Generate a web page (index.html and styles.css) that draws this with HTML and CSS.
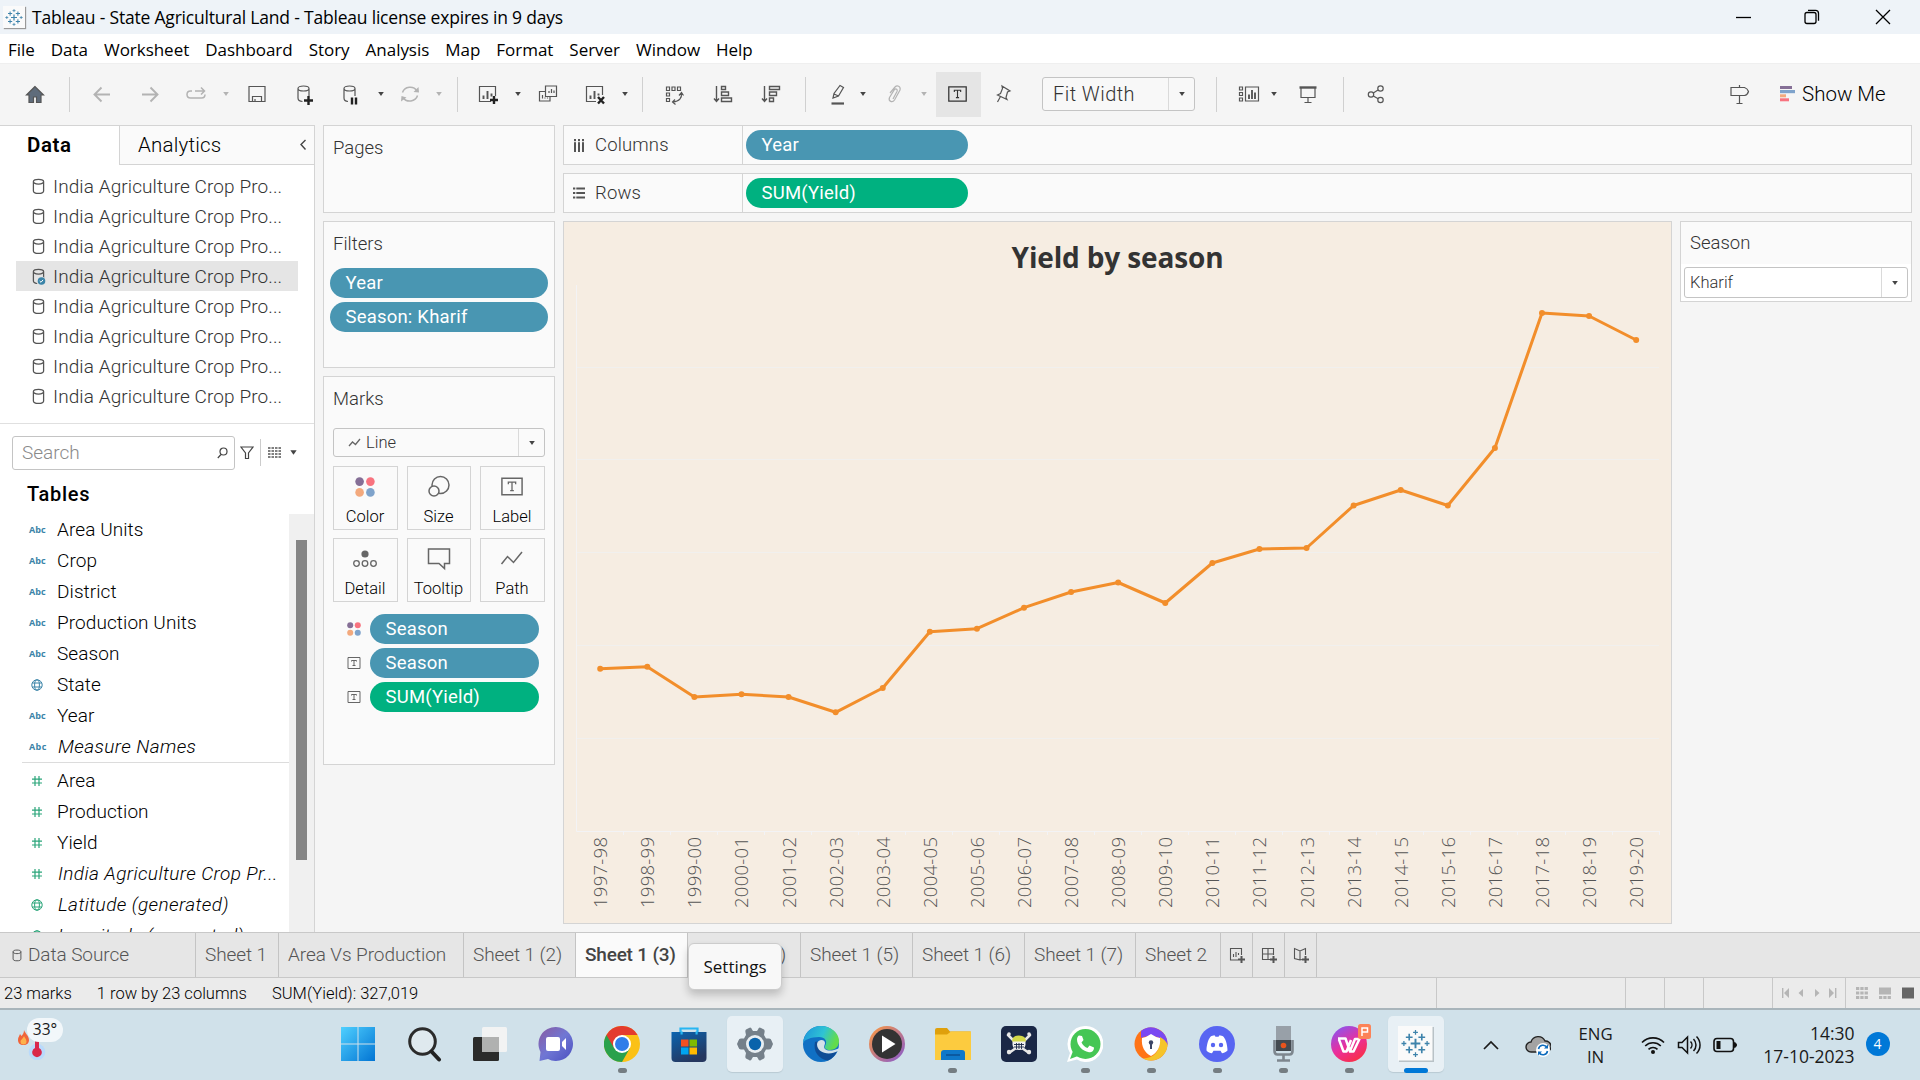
FILE: index.html
```html
<!DOCTYPE html>
<html lang="en">
<head>
<meta charset="utf-8">
<title>Tableau - State Agricultural Land</title>
<link rel="stylesheet" href="styles.css">
</head>
<body>
<svg width="0" height="0" class="defs">
  <defs>
    <symbol id="db" viewBox="0 0 12 16"><path d="M1.2 3.4v8.8c0 1.6 1.6 2.3 4.8 2.3s4.8-.7 4.8-2.3V3.4M1.2 3.4C1.2 2 3 1.3 6 1.3s4.8.7 4.8 2.1S9 5.7 6 5.7 1.2 4.9 1.2 3.4z" fill="none" stroke="#555" stroke-width="1.2"/></symbol>
    <symbol id="caret" viewBox="0 0 8 6"><path d="M1.2 1h5.6L4 5z" fill="currentColor"/></symbol>
    <symbol id="globe" viewBox="0 0 12 12"><g fill="none" stroke="currentColor" stroke-width="1"><circle cx="6" cy="6" r="5.2"/><ellipse cx="6" cy="6" rx="2.4" ry="5.2"/><path d="M1.3 4h9.4M1.3 8h9.4"/></g></symbol>
    <symbol id="hash" viewBox="0 0 12 12"><path d="M4 1v10M8 1v10M1 4.2h10M1 8h10" fill="none" stroke="currentColor" stroke-width="1.2"/></symbol>
    <symbol id="tbox" viewBox="0 0 24 20"><path d="M1 1h22v18H1z" fill="none" stroke="currentColor" stroke-width="1.6"/><path d="M8 7.5V5.3h8v2.2M12 5.3v9.2M10 14.6h4" fill="none" stroke="currentColor" stroke-width="1.4"/></symbol>
    <symbol id="tboxs" viewBox="0 0 14 14"><path d="M1 1.500h12v11H1z" fill="none" stroke="currentColor"/><path d="M4.500 5.500V4.500h5v1M7 4.500v5M5.500 9.500h3" fill="none" stroke="currentColor"/></symbol>
    <symbol id="dots" viewBox="0 0 20 20"><circle cx="4.6" cy="4.6" r="4.3" fill="#856f96"/><circle cx="15.4" cy="4.6" r="4.3" fill="#f8737f"/><circle cx="4.6" cy="15.4" r="4.3" fill="#f3a97d"/><circle cx="15.4" cy="15.4" r="4.3" fill="#7fa3cb"/></symbol>
    <symbol id="tableau" viewBox="0 0 30 30"><g fill="none" stroke="#3e83ab"><path d="M15 10v10M10 15h10" stroke-width="2"/><path d="M8.5 5v7M5 8.5h7M21.500 5v7M18 8.500h7M8.500 18v7M5 21.500h7M21.500 18v7M18 21.500h7" stroke-width="1.700"/><path d="M15 1v5M12.500 3.500h5M15 24v5M12.500 26.500h5M3 12.500v5M.5 15h5M27 12.500v5M24.500 15h5" stroke-width="1.300"/></g></symbol>
  </defs>
</svg>

<header class="titlebar">
  <span class="appicon"><svg width="18" height="19"><use href="#tableau"/></svg></span>
  <span class="apptitle">Tableau - State Agricultural Land - Tableau license expires in 9 days</span>
  <svg class="winbtns" width="160" height="20" viewBox="0 0 160 20"><g fill="none" stroke="#000" stroke-width="1.3"><path d="M1 10.500h15"/><rect x="70" y="5.500" width="11" height="11" rx="2"/><path d="M73 3.300h7.500q3 0 3 3v7.500"/><path d="M141 3l14 14M155 3l-14 14"/></g></svg>
</header>
<nav class="menubar"><span>File</span><span>Data</span><span>Worksheet</span><span>Dashboard</span><span>Story</span><span>Analysis</span><span>Map</span><span>Format</span><span>Server</span><span>Window</span><span>Help</span></nav>

<div class="toolbar">
  <svg class="i m23" viewBox="0 0 24 24"><path d="M12 4.500L3.500 13H6v7.500h4.500V15h3v5.500H18V13h2.500z" fill="#5f6c7b"/></svg>
  <i class="sep m22"></i>
  <svg class="i m20 dim" viewBox="0 0 24 24"><path d="M20 12.500H4.500M11.500 5.500l-7 7 7 7" stroke-width="1.900"/></svg>
  <svg class="i m24 dim" viewBox="0 0 24 24"><path d="M4 12.500h15.500M12.500 5.500l7 7-7 7" stroke-width="1.900"/></svg>
  <svg class="i m22 dim" viewBox="0 0 24 24"><path d="M8 9H6.500Q3 9 3 12.500T6.500 16H17.500Q21 16 21 12.500M11 9h9M17 5.500L20.500 9 17 12.500" stroke-width="1.500"/></svg>
  <svg class="c m14 faint"><use href="#caret"/></svg>
  <svg class="i m15" viewBox="0 0 24 24"><path d="M4 4.500h16v15H4zM7.500 19.500v-5h9v5M10 19.500v-2.500"/></svg>
  <svg class="i m25" viewBox="0 0 24 24"><path d="M4 6.500v9.500c0 2 1.500 3.300 4.500 3.500M4 6.500c0-1.500 2-2.500 5.500-2.500S15 5 15 6.500 13 9 9.500 9 4 8 4 6.500zM15 6.500V14"/><path d="M14.500 14v9M10 18.500h9" class="bold"/></svg>
  <svg class="i m21" viewBox="0 0 24 24"><path d="M5 6.500v9.500c0 2 1.500 3.300 4 3.500M5 6.500C5 5 7 4 10.500 4S16 5 16 6.500 14 9 10.500 9 5 8 5 6.500zM16 6.500V14"/><path d="M13 15.500v7M17 15.500v7" class="bold"/></svg>
  <svg class="c m14"><use href="#caret"/></svg>
  <svg class="i m13 dim" viewBox="0 0 24 24"><path d="M4.500 10.500A8 7.500 0 0 1 19 9M19.500 13.500A8 7.500 0 0 1 5 15.500" stroke-width="1.500"/><path d="M20.500 5l.5 5.500-5.500-.5zM3 19.500L3.500 14l5 1.500z" fill="#b3b3b3" stroke="none"/></svg>
  <svg class="c m13 faint"><use href="#caret"/></svg>
  <i class="sep m14"></i>
  <svg class="i m19" viewBox="0 0 24 24"><path d="M14 19.500H2.500v-15h16V14"/><path d="M6.500 13.500v3.500M10.500 9v8M14.500 11.500v3" stroke-width="1.900"/><path d="M17 14v8M13 18h8" class="bold"/></svg>
  <svg class="c m13"><use href="#caret"/></svg>
  <svg class="i m14" viewBox="0 0 24 24"><path d="M9.500 4h11v10.500h-11zM9.500 9.500H3.500v9.500h10.500v-4.500M13 11V9M15.500 11V7M18 11V8.500M6.500 16.500V13M9 16.500V15.500M11.500 16.500V15.500"/></svg>
  <svg class="i m24" viewBox="0 0 24 24"><path d="M12 19.500H2.500v-15h16V13"/><path d="M6.500 13.500v3.500M10.500 9v8M14.500 11.500v2" stroke-width="1.900"/><path d="M14 15l6 6.500M20 15l-6 6.500" class="bold"/></svg>
  <svg class="c m13"><use href="#caret"/></svg>
  <i class="sep m13"></i>
  <svg class="i m19" viewBox="0 0 24 24"><path d="M4.500 5h3v3.500h-3zM10 5h3v3.500h-3zM15.500 5h3v3.500h-3zM4.500 11h3v3h-3zM4.500 16.500h3v3h-3zM19.500 11c.5 5-2 8.500-8.500 9M17 13.500l2.500-3 2 3M13 17.500L10.500 20l3 2.500"/></svg>
  <svg class="i m25" viewBox="0 0 24 24"><path d="M5.500 4v15M3 16.500l2.500 3 2.500-3M10.500 4.500h4v3h-4zM10.500 10h7v3.500h-7zM10.500 16h10v3.500h-10z" stroke-width="1.400"/></svg>
  <svg class="i m24" viewBox="0 0 24 24"><path d="M5.500 4v15M3 16.500l2.500 3 2.500-3M10.500 4.500h10v3h-10zM10.500 10h7v3.500h-7zM10.500 16h4v3.500h-4z" stroke-width="1.400"/></svg>
  <i class="sep m22"></i>
  <svg class="i m20" viewBox="0 0 24 24"><path d="M7 16l1-4.500 6-8 3.500 2-5 8.500zM8 12l4.500 2"/><path d="M5.500 21.500h12.500" stroke-width="2.200"/></svg>
  <svg class="c m9"><use href="#caret"/></svg>
  <svg class="i m16 dim" viewBox="0 0 24 24"><path d="M7 11l5-6c2-2 6-1 5 3l-5.500 10c-2 3-6.500 1.500-5-2.500l5-8c1.500-1.500 3.500 0 2.500 2l-4 7.500"/></svg>
  <svg class="c m13 faint"><use href="#caret"/></svg>
  <span class="on m8"><svg width="19" height="16"><use href="#tbox"/></svg></span>
  <svg class="i m10" viewBox="0 0 24 24"><path d="M11 4l8 5-2.500 1-1.500 5.500 1 2-9.500-4.500 3-1.500 2-5zM9.500 14.500L6.500 20"/></svg>
  <div class="fit m27"><span>Fit Width</span><b><svg class="c"><use href="#caret"/></svg></b></div>
  <i class="sep m21"></i>
  <svg class="i m20" viewBox="0 0 24 24"><path d="M8.500 5h13v14h-13zM2.500 5h3v3h-3zM2.500 10.500h3v3h-3zM2.500 16h3v3h-3z"/><path d="M12 12.500v4.500M15 8v9M18 10.500V17" stroke-width="1.900"/></svg>
  <svg class="c m9"><use href="#caret"/></svg>
  <svg class="i m18" viewBox="0 0 24 24"><path d="M5 6v9.500h14V6M12 15.500V20M8.500 20.500h7"/><path d="M3.500 5.500h17" stroke-width="2.400"/></svg>
  <i class="sep m23"></i>
  <svg class="i m20" viewBox="0 0 24 24"><circle cx="7" cy="12.500" r="2.700"/><circle cx="16.500" cy="6.500" r="2.700"/><circle cx="16.500" cy="18" r="2.700"/><path d="M9.300 11L14 8M9.300 14l4.900 2.800"/></svg>
  <svg class="i right" viewBox="0 0 24 24"><path d="M4 5.500h13.500q3 1 4 4-1 3.500-4 4H4zM12.500 3v2.500M12.500 13.500v7.500M9.500 21.500h6"/></svg>
  <svg class="sm" width="16" height="16"><path d="M0 0h12v3H0z" fill="#856f96"/><path d="M0 4h15v3.200H0z" fill="#7fa3cb"/><path d="M0 8.300h6v3H0z" fill="#f3a97d"/><path d="M0 12.300h9v3H0z" fill="#f8737f"/></svg>
  <span class="showme">Show Me</span>
</div>

<main class="work">
  <aside class="datapane">
    <div class="panetabs"><b>Data</b><div><span>Analytics</span><svg width="8" height="12"><path d="M6.500 1L2 5.500l4.500 5" fill="none" stroke="#444" stroke-width="1.400"/></svg></div></div>
    <ul class="sources">
      <li><svg><use href="#db"/></svg>India Agriculture Crop Pro...</li>
      <li><svg><use href="#db"/></svg>India Agriculture Crop Pro...</li>
      <li><svg><use href="#db"/></svg>India Agriculture Crop Pro...</li>
      <li class="sel"><svg><use href="#db"/><circle cx="10" cy="13" r="4.700" fill="#e5e5e5"/><circle cx="10.500" cy="13" r="3.800" fill="#3b84a8"/><path d="M8.700 13l1.300 1.300 2-2.400" fill="none" stroke="#fff"/></svg>India Agriculture Crop Pro...</li>
      <li><svg><use href="#db"/></svg>India Agriculture Crop Pro...</li>
      <li><svg><use href="#db"/></svg>India Agriculture Crop Pro...</li>
      <li><svg><use href="#db"/></svg>India Agriculture Crop Pro...</li>
      <li><svg><use href="#db"/></svg>India Agriculture Crop Pro...</li>
    </ul>
    <div class="searchrow">
      <div class="search"><span>Search</span><svg width="11" height="12"><g fill="none" stroke="#444" stroke-width="1.200"><circle cx="6.500" cy="4.500" r="3.500"/><path d="M4 7.500L.8 11"/></g></svg></div>
      <svg class="funnel" width="14" height="14"><path d="M1 1h12L8.500 7v5.500h-3V7z" fill="none" stroke="#444" stroke-width="1.200"/></svg>
      <i></i>
      <svg class="listicon" width="13" height="11"><path d="M0 1h13M0 4h13M0 7h13M0 10h13" stroke="#555" stroke-width="1.600" stroke-dasharray="2.500 1"/></svg>
      <svg class="c"><use href="#caret"/></svg>
    </div>
    <h3>Tables</h3>
    <div class="fieldwrap">
      <ul class="fields">
        <li><em>Abc</em><span>Area Units</span></li>
        <li><em>Abc</em><span>Crop</span></li>
        <li><em>Abc</em><span>District</span></li>
        <li><em>Abc</em><span>Production Units</span></li>
        <li><em>Abc</em><span>Season</span></li>
        <li><svg class="blue"><use href="#globe"/></svg><span>State</span></li>
        <li><em>Abc</em><span>Year</span></li>
        <li class="gen"><em>Abc</em><span>Measure Names</span></li>
        <li class="rule"></li>
        <li><svg><use href="#hash"/></svg><span>Area</span></li>
        <li><svg><use href="#hash"/></svg><span>Production</span></li>
        <li><svg><use href="#hash"/></svg><span>Yield</span></li>
        <li class="gen"><svg><use href="#hash"/></svg><span>India Agriculture Crop Pr...</span></li>
        <li class="gen"><svg><use href="#globe"/></svg><span>Latitude (generated)</span></li>
        <li class="gen"><svg><use href="#globe"/></svg><span>Longitude (generated)</span></li>
      </ul>
      <div class="scroll"><i></i></div>
    </div>
  </aside>

  <section class="cards">
    <div class="card pages"><h4>Pages</h4></div>
    <div class="card filters"><h4>Filters</h4><div class="pill">Year</div><div class="pill">Season: Kharif</div></div>
    <div class="card marks">
      <h4>Marks</h4>
      <div class="select"><svg width="13" height="10"><path d="M1 8l3.500-4 3 2.500L12 1" fill="none" stroke="#666" stroke-width="1.300"/></svg><span>Line</span><b><svg class="c"><use href="#caret"/></svg></b></div>
      <div class="btns">
        <div><svg><use href="#dots" x="2" y="2" width="20" height="20"/></svg>Color</div>
        <div><svg><g fill="none" stroke="#666" stroke-width="1.500"><circle cx="13.500" cy="10" r="8.500"/><circle cx="7" cy="16" r="5" fill="#fafafa"/></g></svg>Size</div>
        <div><svg class="grey"><use href="#tbox" x="1" y="2" width="22" height="19"/></svg>Label</div>
        <div><svg><circle cx="12" cy="7" r="3.600" fill="#666"/><g fill="none" stroke="#666" stroke-width="1.300"><circle cx="3.500" cy="16.500" r="2.800"/><circle cx="12" cy="16.500" r="2.800"/><circle cx="20.500" cy="16.500" r="2.800"/></g></svg>Detail</div>
        <div><svg><path d="M1.500 2h21v14.500h-5v5l-5.500-5H1.500z" fill="none" stroke="#666" stroke-width="1.500"/></svg>Tooltip</div>
        <div><svg><path d="M1.500 17l6-7.500 6 6L22 5" fill="none" stroke="#666" stroke-width="1.500"/></svg>Path</div>
      </div>
      <div class="encs">
        <svg><use href="#dots"/></svg><div class="pill">Season</div>
        <svg class="grey"><use href="#tboxs"/></svg><div class="pill">Season</div>
        <svg class="grey"><use href="#tboxs"/></svg><div class="pill green">SUM(Yield)</div>
      </div>
    </div>
  </section>

  <section class="view">
    <div class="shelf"><div class="shelfname"><svg width="12" height="13"><path d="M2 0v13M6 0v13M10 0v13" stroke="#555" stroke-width="2"/><path d="M0 2.700h12" stroke="#fafafa"/></svg>Columns</div><div class="pill">Year</div></div>
    <div class="shelf"><div class="shelfname"><svg width="12" height="12"><path d="M0 1.500h12M0 6h12M0 10.500h12" stroke="#555" stroke-width="2"/><path d="M2.800 0v12" stroke="#fafafa"/></svg>Rows</div><div class="pill green">SUM(Yield)</div></div>
    <div class="lower">
      <div class="canvas">
        <h1>Yield by season</h1>
        <svg class="plot" id="plot" width="1107" height="650"></svg>
      </div>
      <div class="filtercard"><h4>Season</h4><div class="select"><span>Kharif</span><b><svg class="c"><use href="#caret"/></svg></b></div></div>
    </div>
  </section>
</main>

<div class="sheets">
  <span class="ds"><svg width="10" height="13"><use href="#db"/></svg>Data Source</span><span class="w83">Sheet 1</span><span class="w185">Area Vs Production</span><span class="w112">Sheet 1 (2)</span><span class="w112 cur">Sheet 1 (3)</span><span class="w113">Sheet 1 (4)</span><span class="w112">Sheet 1 (5)</span><span class="w112">Sheet 1 (6)</span><span class="w111">Sheet 1 (7)</span><span class="w85">Sheet 2</span>
  <span class="new"><svg viewBox="0 0 16 16"><path d="M9 13H1.500V1.500h11V8M4.500 10V7M7 10V5M9.500 8V6"/><path d="M12.500 9v7M9 12.500h7" stroke-width="2"/></svg></span>
  <span class="new"><svg viewBox="0 0 16 16"><path d="M9 12.500H1.500v-11h11V8M1.500 7h11M7 1.500v11"/><path d="M12.500 9v7M9 12.500h7" stroke-width="2"/></svg></span>
  <span class="new"><svg viewBox="0 0 16 16"><path d="M9 12.500L7 13l-5.500-1.500v-10L7 4l5.500-2.500V8M7 4v9"/><path d="M12.500 9v7M9 12.500h7" stroke-width="2"/></svg></span>
</div>
<div class="status">
  <span>23 marks</span><span>1 row by 23 columns</span><span>SUM(Yield): 327,019</span>
  <div class="cells"><i class="c1"></i><i class="c2"></i><i class="c3"></i><i class="c4"></i>
    <i class="c5"><svg width="56" height="10" fill="#b5b5b5"><path d="M1 0h1.400v10H1zM8 0v10L3 5zM22 1v8l-4.500-4zM34 1v8l4.500-4zM48 0v10l5-5zM54 0h1.400v10H54z"/></svg></i>
    <i class="c6"><svg width="58" height="12"><path d="M0 1.500h12M0 6h12M0 10.500h12" stroke="#b5b5b5" stroke-width="3" stroke-dasharray="3.300 1"/><path d="M23 .5h12v7H23z" fill="#b5b5b5"/><path d="M23 10.500h12" stroke="#b5b5b5" stroke-width="3" stroke-dasharray="3.300 1"/><path d="M46 .5h12v11H46z" fill="#666"/></svg></i></div>
</div>

<footer class="taskbar">
  <div class="weather">
    <svg width="48" height="44" viewBox="0 0 48 44"><path d="M7 14c1 3 5 6 5 10 0 3-2 5-5.500 5S1 27 1 24c0-3 1.500-4 2-6l1.500 2C6 18.500 7 17 7 14z" fill="#f0643a"/><path d="M7 20c.5 2 2.500 3 2.500 5.500 0 2-1 3-3 3s-3-1-3-3S6 23 7 20z" fill="#fdb24b"/><circle cx="20" cy="36" r="8.300" fill="#b9dafc"/><path d="M18 18h4v14a4.800 4.800 0 1 1-4 0z" fill="#d9274b"/></svg>
    <span>33°</span>
  </div>
  <div class="apps">
    <div><svg viewBox="0 0 36 36"><defs><linearGradient id="gw" x2="1" y2="1"><stop stop-color="#4fd0ff"/><stop offset="1" stop-color="#0274d3"/></linearGradient></defs><path d="M1 1h16.500v16.500H1zM18.500 1H35v16.500H18.500zM1 18.500h16.500V35H1zM18.500 18.500H35V35H18.500z" fill="url(#gw)"/></svg></div>
    <div><svg viewBox="0 0 36 36"><circle cx="16.500" cy="15.500" r="12.800" fill="#dfe9ee" stroke="#2b2b2b" stroke-width="3"/><path d="M25.500 25.500l7.500 8" stroke="#222" stroke-width="4" stroke-linecap="round"/></svg></div>
    <div><svg viewBox="0 0 36 36"><rect x="1" y="11" width="26" height="24" rx="1.500" fill="#2b2b2a"/><rect x="10" y="1" width="25" height="25" rx="1.500" fill="#f3f3f3" opacity=".95"/><path d="M10 11h17v15H10z" fill="#b0b1b0"/></svg></div>
    <div><svg viewBox="0 0 36 36"><defs><linearGradient id="gc" x2="1" y2="1"><stop stop-color="#8a5aa0"/><stop offset=".5" stop-color="#7077d4"/><stop offset="1" stop-color="#4a4fc0"/></linearGradient></defs><path d="M18 1a17 17 0 1 1-8 32l-8.500 2 1-9A17 17 0 0 1 18 1z" fill="url(#gc)"/><rect x="8" y="11" width="14" height="14" rx="2" fill="#fff"/><path d="M24 16l4-4v12l-4-4z" fill="#fff"/></svg></div>
    <div class="run"><svg viewBox="0 0 36 36"><circle cx="18" cy="18" r="18" fill="#fbc116"/><path d="M18 18L2.400 9A18 18 0 0 0 18 36l8-14z" fill="#2aa14c"/><path d="M18 9h15.600a18 18 0 0 0-31.200 0l8 13.500z" fill="#e33b2e"/><circle cx="18" cy="18" r="9" fill="#fff"/><circle cx="18" cy="18" r="7" fill="#2f7de9"/></svg></div>
    <div><svg viewBox="0 0 36 36"><defs><linearGradient id="gs" x2=".5" y2="1"><stop stop-color="#0a64b0"/><stop offset="1" stop-color="#25375f"/></linearGradient></defs><path d="M9.500 8V2.500h17V8" fill="none" stroke="#27b6f2" stroke-width="2.200"/><path d="M.5 6h35v26q0 4-4 4h-27q-4 0-4-4z" fill="url(#gs)"/><path d="M9.500 5.500h2.200v3H9.500zM24.500 5.500h2.200v3h-2.200z" fill="#27b6f2"/><path d="M10 13.500h7.500v7H10z" fill="#f25022"/><path d="M18.500 13.500H26v7h-7.500z" fill="#7fba00"/><path d="M10 21.500h7.500v7H10z" fill="#00a4ef"/><path d="M18.500 21.500H26v7h-7.500z" fill="#ffb900"/></svg></div>
    <div class="hot"><svg viewBox="0 0 36 36"><path d="M12 2q2-1.500 3 1.500l1 1.500h4l1-1.500q1-3 3-1.500l3 1.500q1 .8.500 3L27 9l2 3.500h3q2 0 2.500 2L36 18l-1.500 3.500q-.5 2-2.500 2h-3L27 27l.5 2.500q.5 2-.5 3L24 34q-2 1.500-3-1.500L20 31h-4l-1 1.500q-1 3-3 1.500l-3-1.500q-1-1-.5-3L9 27l-2-3.500H4q-2 0-2.500-2L0 18l1.500-3.500q.5-2 2.500-2h3L9 9l-.5-2.500q-.5-2 .5-3z" fill="#75808a"/><circle cx="18" cy="18" r="9" fill="#e8eef2"/><circle cx="18" cy="18" r="6.200" fill="#0a63ab"/></svg></div>
    <div><svg viewBox="0 0 36 36"><defs><linearGradient id="ge" x2="1" y2=".3"><stop stop-color="#1c92dc"/><stop offset=".6" stop-color="#2fc3d4"/><stop offset="1" stop-color="#62dc4c"/></linearGradient></defs><circle cx="18" cy="18" r="18" fill="#1070c4"/><path d="M0 17C1 7 8 0 18 0c10 0 18 7 18 15 0 6-4 9-9 9-4 0-6-2-5-4 3-5 0-9-6-9C8 11 1 14 0 17z" fill="url(#ge)"/><path d="M12 16c-2 9 3 17 13 18.500 4-1.500 8-6 9-9.500-8 4-18 1-17-7-2-3-4-3-5-2z" fill="#0f4c95"/><path d="M14 18c.5-5 8-5.500 8-1 0 2-2 4 0 6 3 2.500 8 2 14.500-1L35 25c-9 5-21 2-21-7z" fill="#d3e1e9"/></svg></div>
    <div><svg viewBox="0 0 36 36"><defs><linearGradient id="gm" x2="1" y2="1"><stop stop-color="#ff9a3c"/><stop offset="1" stop-color="#8358d2"/></linearGradient></defs><circle cx="18" cy="18" r="18" fill="url(#gm)"/><circle cx="18" cy="18" r="15" fill="#333"/><path d="M13 9.500L26.500 18 13 26.500z" fill="#fff"/></svg></div>
    <div class="run"><svg viewBox="0 0 36 36"><path d="M0 4q0-2 2-2h10l3 3.500H35q1 0 1 1V14H0z" fill="#dfa00c"/><path d="M0 8.500h12l4-3h20V34H0z" fill="#fccb3f"/><path d="M6 34v-7q0-3 3-3h18q3 0 3 3v7z" fill="#0f78c9"/><path d="M11 29h14" stroke="#0b4f92" stroke-width="1.500"/></svg></div>
    <div><svg viewBox="0 0 36 36"><rect width="36" height="36" rx="5" fill="#1a2746"/><path d="M7 9l5 5M29 9l-5 5M8 27l7-5M28 27l-7-5" stroke="#e8e8e8" stroke-width="2.500" stroke-linecap="round"/><g fill="#e8e8e8"><circle cx="8" cy="8" r="1.800"/><circle cx="28" cy="8" r="1.800"/><circle cx="8" cy="26" r="2.200"/><circle cx="28" cy="26" r="2.200"/></g><path d="M11.500 15h13v4q-1 5-6.500 5t-6.500-5z" fill="#f0f0f0"/><path d="M11 15.500q0-6 7-6t7 6z" fill="#d3d84a"/><path d="M13 18.500h10M13 21h10M15.500 17v6M18 17v6M20.500 17v6" stroke="#1a2746" stroke-width=".9"/></svg></div>
    <div class="run"><svg viewBox="0 0 36 36"><path d="M18.500 0A17.500 18 0 1 1 10 33.500L0 36l3-9A17.500 18 0 0 1 18.500 0z" fill="#fff"/><circle cx="18.500" cy="18" r="15" fill="#45c654"/><path d="M3 33l3-8 5 5z" fill="#45c654"/><path d="M12 9.500l3 .5 1.500 4-2 2.500c1.500 3 3.500 4.500 6 5.500l2-2.500 4.500 2c0 3.500-2.500 5-5 4.800C15 25 10 19 10 13.500c0-2 1-3.500 2-4z" fill="#fff"/></svg></div>
    <div class="run"><svg viewBox="0 0 36 36"><circle cx="18" cy="18" r="16.500" fill="#ff7417"/><path d="M8 5a16.500 16.500 0 0 1 26.500 14C28 10 18 8 8 12z" fill="#7a48f2"/><path d="M34.500 19A16.500 16.500 0 0 1 10 32.500C22 32 28 24 27 11q6 3 7.500 8z" fill="#f5c42a"/><path d="M9 12q5-1 9-4 4 3 9 4c1 9-3 15-9 18-6-3-10-9-9-18z" fill="#fff"/><circle cx="18" cy="16.500" r="2.200" fill="#3c4566"/><path d="M17 17h2v6h-2z" fill="#3c4566"/></svg></div>
    <div class="run"><svg viewBox="0 0 36 36"><circle cx="18" cy="18" r="18" fill="#5865f2"/><path d="M12.500 10l3-.8 1 1.600h3l1-1.600 3 .8c3 1.500 5 9 5 14.500-2 2-4 2.500-5.500 2.800l-1.500-2.500h-7L13 27.300c-2-.3-4-1-5.500-2.800 0-5.500 2-13 5-14.500z" fill="#fff"/><circle cx="14" cy="19" r="2.200" fill="#5865f2"/><circle cx="22" cy="19" r="2.200" fill="#5865f2"/></svg></div>
    <div class="run"><svg viewBox="0 0 36 36"><path d="M11 0h15v14H11z" fill="#98a0a8"/><path d="M11 14h15v11H11z" fill="#444a50"/><path d="M9.500 14v11q0 3.500 3 3.500h12q3 0 3-3.500V14M18.500 29v6M12 34.500h13" fill="none" stroke="#7d868e" stroke-width="2.600"/><circle cx="18.500" cy="19.500" r="2.800" fill="#e8541d"/></svg></div>
    <div class="run"><svg viewBox="0 0 36 36" overflow="visible"><defs><linearGradient id="gp" x1=".2" x2=".8" y2="1"><stop stop-color="#8b55ee"/><stop offset=".5" stop-color="#e92f9e"/><stop offset="1" stop-color="#fb2f3d"/></linearGradient></defs><circle cx="18" cy="18" r="18" fill="url(#gp)"/><path d="M7 12.500h7.500L19 25.500h3.500L28.500 13H24L19 25M8 13.500l4.500 12h3L20 14" fill="none" stroke="#fff" stroke-width="2.500" stroke-linejoin="round"/><rect x="27" y="-2" width="13" height="15" rx="2.500" fill="#fc8358"/><path d="M31 10V2h5.500v4H31" fill="none" stroke="#fff" stroke-width="1.500"/></svg></div>
    <div class="hot active"><svg viewBox="0 0 36 36"><rect x="1" y="1" width="35" height="35" fill="#b9c2c7"/><rect width="34.500" height="34.500" fill="#fafafa"/><use href="#tableau" x="3" y="3" width="29" height="29"/></svg></div>
  </div>
  <div class="tray">
    <svg width="16" height="10"><path d="M1 9l7-7 7 7" fill="none" stroke="#1a1a1a" stroke-width="1.700"/></svg>
    <svg class="cloud" width="26" height="26"><path d="M6 20a5 5 0 0 1 0-10 7.500 7.500 0 0 1 14-1 5.500 5.500 0 0 1 1 11z" fill="#a3a3a3" stroke="#222" stroke-width="1.400"/><circle cx="18" cy="18" r="7" fill="#fff"/><path d="M13.500 17a4.600 4.600 0 0 1 8.500-1.500M22.500 19a4.600 4.600 0 0 1-8.500 1.500" fill="none" stroke="#0f6cbd" stroke-width="1.600"/><path d="M23 12.500v4h-4zM13 23.500v-4h4z" fill="#0f6cbd"/></svg>
    <div class="lang"><span>ENG</span><span>IN</span></div>
    <svg class="wifi" width="24" height="20"><g fill="none" stroke="#111" stroke-width="1.600"><path d="M1 7.500a15.500 15.500 0 0 1 22 0M4.200 11a11 11 0 0 1 15.600 0M7.500 14.300a6.500 6.500 0 0 1 9 0"/></g><circle cx="12" cy="17" r="2" fill="#111"/></svg>
    <svg class="vol" width="25" height="20"><g fill="none" stroke="#111" stroke-width="1.500"><path d="M1.500 7.500H5L10.500 2v16L5 12.500H1.500zM13.500 6.500a5 5 0 0 1 0 7M16.500 4a8.500 8.500 0 0 1 0 12M19.500 1.500a12 12 0 0 1 0 17"/></g></svg>
    <svg class="bat" width="24" height="16"><rect x="1" y="1.500" width="19.500" height="13" rx="3" fill="none" stroke="#111" stroke-width="1.600"/><path d="M3.500 4h4v8h-4z" fill="#111"/><path d="M21.500 5.500q2 .5 2 2.500t-2 2.500z" fill="#111" stroke="#111"/></svg>
    <div class="clock"><span>14:30</span><span>17-10-2023</span></div>
    <b>4</b>
  </div>
</footer>
<div class="tip">Settings</div>
<script src="chart.js"></script>
</body>
</html>
```
FILE: styles.css
```css
* { box-sizing: border-box; }
body { margin: 0; width: 1920px; height: 1080px; overflow: hidden; display: flex; flex-direction: column; background: #f5f5f5; font-family: Roboto, "Liberation Sans", sans-serif; font-weight: 300; font-size: 19px; color: #333; position: relative; }
ul, h1, h3, h4 { margin: 0; padding: 0; list-style: none; font-weight: inherit; }
svg { flex: none; }
.defs { position: absolute; }
.titlebar { height: 34px; flex: none; background: #eef3f8; display: flex; align-items: center; padding: 0 25px 0 3px; font-family: "Open Sans", sans-serif; font-weight: 400; font-size: 17px; color: #000; }
.appicon { width: 22px; height: 22px; background: #fafafa; box-shadow: 1px 1px 1px #999; display: grid; place-items: center; }
.apptitle { margin-left: 7px; font-size: 17.500px; letter-spacing: -.2px; }
.winbtns { margin-left: auto; }
.menubar { height: 30px; flex: none; background: #fff; border-bottom: 1px solid #efefef; display: flex; align-items: center; gap: 16px; padding: 2px 0 0 8px; font-family: "Open Sans", sans-serif; font-weight: 400; font-size: 17px; color: #000; letter-spacing: -.03px; }
.toolbar { height: 61px; flex: none; display: flex; align-items: center; padding-bottom: 1px; }
.i { width: 24px; height: 24px; fill: none; stroke: #555; stroke-width: 1.2; }
.i.dim { stroke: #b3b3b3; }
.bold { stroke: #222; stroke-width: 2.4; }
.c { width: 8px; height: 6px; color: #444; }
.faint { color: #b3b3b3; }
.sep { width: 1px; height: 35px; background: #d0d0d0; }
.m8 { margin-left: 8px } .m9 { margin-left: 9px } .m10 { margin-left: 10px } .m13 { margin-left: 13px } .m14 { margin-left: 14px } .m15 { margin-left: 15px } .m16 { margin-left: 16px } .m18 { margin-left: 18px } .m19 { margin-left: 19px } .m20 { margin-left: 20px } .m21 { margin-left: 21px } .m22 { margin-left: 22px } .m23 { margin-left: 23px } .m24 { margin-left: 24px } .m25 { margin-left: 25px } .m27 { margin-left: 27px }
.on { width: 45px; height: 45px; background: #e5e5e5; display: grid; place-items: center; color: #333; }
.on svg { margin-right: 2px; margin-bottom: 1px; }
.fit { width: 153px; height: 34px; border: 1px solid #c4c4c4; border-radius: 3px; display: flex; align-items: center; font-size: 20px; background: #f8f8f8; padding-left: 10px; letter-spacing: .45px; }
.fit b, .select b { margin-left: auto; width: 26px; align-self: stretch; border-left: 1px solid #dadada; display: grid; place-items: center; }
.right { margin-left: auto; }
.sm { margin-left: 29px; }
.showme { margin-left: 6px; width: 118px; font-size: 20.5px; color: #000; }

.work { height: 807px; flex: none; display: flex; }
.datapane { width: 315px; background: #fff; border-top: 1px solid #d4d4d4; border-right: 1px solid #d4d4d4; display: flex; flex-direction: column; overflow: hidden; }
.panetabs { height: 39px; flex: none; display: flex; font-size: 20.5px; color: #000; line-height: 38px; letter-spacing: .2px; }
.panetabs b { width: 119px; padding-left: 27px; font-weight: 600; letter-spacing: .6px; }
.panetabs div { flex: 1; background: #fafafa; border-left: 1px solid #d4d4d4; border-bottom: 1px solid #d4d4d4; padding: 0 7px 0 18px; display: flex; justify-content: space-between; align-items: center; }
.sources { height: 259px; flex: none; padding: 6px 16px 0; border-bottom: 1px solid #e0e0e0; letter-spacing: .09px; }
.sources li { height: 30px; display: flex; align-items: center; padding-left: 15px; white-space: nowrap; }
.sources svg { width: 15px; height: 17px; margin-right: 7px; }
.sources use { width: 11px; height: 15px; }
.sources .sel { background: #e5e5e5; }
.searchrow { height: 57px; flex: none; display: flex; align-items: center; padding-left: 12px; }
.search { width: 223px; height: 34px; border: 1px solid #c4c4c4; border-radius: 3px; display: flex; align-items: center; justify-content: space-between; padding: 0 6px 0 9px; color: #8a8a8a; }
.searchrow i { width: 1px; height: 27px; background: #ccc; margin: 0 7px 0 6px; }
.funnel { margin-left: 5px; }
.searchrow .c { margin-left: 8px; width: 9px; height: 7px; }
h3 { font-size: 20px; font-weight: 500; color: #000; height: 33px; flex: none; padding-left: 27px; line-height: 26px; letter-spacing: .7px; }
.fieldwrap { height: 418px; flex: none; display: flex; overflow: hidden; }
.fields { width: 289px; color: #000; letter-spacing: .08px; }
.fields li { height: 31px; display: flex; align-items: center; }
.fields span { white-space: nowrap; }
.fields em { width: 28px; margin-left: 29px; font: 700 9px "Open Sans", sans-serif; color: #3b84a8; }
.fields svg { width: 12px; height: 12px; margin: 0 14px 0 31px; color: #2ba57a; }
.fields svg.blue { color: #3b84a8; }
.fields .gen { font-style: italic; letter-spacing: .4px; }
.fields .gen span { margin-left: 1px; }
.fields .rule { height: 1px; margin: 0 0 2px 22px; background: #dcdcdc; }
.scroll { flex: 1; background: #f0f0f0; padding: 26px 7px 0; }
.scroll i { display: block; height: 320px; background: #858585; }

.cards { width: 232px; margin-left: 8px; display: flex; flex-direction: column; gap: 8px; font-size: 18.500px; }
.card { background: #fafafa; border: 1px solid #d4d4d4; }
.card h4 { padding: 10px 0 0 9px; line-height: 24px; }
.pages { height: 88px; } .filters { height: 147px; } .marks { height: 389px; }
.pill { height: 30px; border-radius: 15px; background: #4996b2; color: #fff; font-weight: 400; font-size: 18.500px; line-height: 31px; padding-left: 15.500px; letter-spacing: .2px; }
.pill.green { background: #00b180; }
.filters .pill { margin: 12px 6px 0; }
.filters .pill + .pill { margin-top: 4px; }
.select { height: 29px; border: 1px solid #c4c4c4; border-radius: 3px; display: flex; align-items: center; font-size: 16.500px; }
.marks .select { margin: 17px 9px 0; padding-left: 14px; }
.marks .select span { margin-left: 5px; }
.btns { display: grid; grid-template-columns: 65px 64px 65px; gap: 8px 9px; margin: 9px 9px 0; }
.btns div { height: 64px; border: 1px solid #d4d4d4; display: flex; flex-direction: column; align-items: center; font-size: 16.500px; line-height: 20px; color: #000; padding: 8px 1px 0 0; }
.btns svg { width: 24px; height: 24px; margin-bottom: 8px; }
.grey { color: #666; }
.encs { display: grid; grid-template-columns: 14px 169px; gap: 4px 9px; align-items: center; margin: 12px 0 0 23px; }
.encs svg { width: 14px; height: 14px; }

.view { width: 1349px; margin-left: 8px; }
.shelf { height: 40px; border: 1px solid #d4d4d4; background: #fafafa; margin-bottom: 8px; display: flex; align-items: center; font-size: 18.500px; }
.shelfname { width: 179px; height: 38px; border-right: 1px solid #d4d4d4; padding-left: 9px; display: flex; align-items: center; gap: 10px; letter-spacing: .15px; }
.shelf .pill { width: 222px; margin-left: 3px; }
.lower { display: flex; justify-content: space-between; align-items: flex-start; }
.canvas { width: 1109px; height: 703px; border: 1px solid #d4d4d4; background: #f6ede2; }
.canvas h1 { height: 51px; padding-top: 16px; text-align: center; font: 700 28px/38px "Open Sans", sans-serif; letter-spacing: -.15px; color: #333; }
.plot { display: block; }
.plot text { font: 300 18.500px "Open Sans", sans-serif; fill: #555; }
.filtercard { width: 232px; height: 81px; border: 1px solid #d4d4d4; background: #fff; font-size: 18.500px; }
.filtercard h4 { height: 42px; background: #fafafa; line-height: 42px; padding-left: 9px; }
.filtercard .select { height: 31px; margin: 3px; padding-left: 5px; color: #333; }

.sheets { height: 46px; flex: none; background: #e6e6e6; border-top: 1px solid #c8c8c8; border-bottom: 1px solid #c8c8c8; display: flex; color: #555; font-size: 19px; line-height: 44px; letter-spacing: -.08px; }
.sheets span { border-right: 1px solid #c4c4c4; padding-left: 9px; white-space: nowrap; }
.sheets .ds { width: 196px; padding-left: 12px; display: flex; align-items: center; gap: 6px; }
.w83 { width: 83px } .w85 { width: 85px } .w111 { width: 111px } .w112 { width: 112px } .w113 { width: 113px } .w185 { width: 185px }
.sheets .cur { background: #fafafa; font-weight: 500; color: #444; letter-spacing: -.2px; }
.sheets .new { width: 32px; padding: 0; display: grid; place-items: center; }
.new svg { width: 16px; height: 16px; fill: none; stroke: #555; stroke-width: 1.1; }
.status { height: 32px; flex: none; background: #ebebeb; border-bottom: 2px solid #a9b5bb; display: flex; align-items: center; gap: 25px; padding-left: 4px; font-size: 16.500px; color: #000; }
.cells { margin-left: auto; display: flex; align-self: stretch; }
.cells i { border-left: 1px solid #c8c8c8; display: flex; align-items: center; }
.c1 { width: 189px } .c2 { width: 39px } .c3 { width: 39px } .c4 { width: 69px } .c5 { width: 73px; padding-left: 8px } .c6 { width: 75px; padding-left: 10px }

.taskbar { height: 70px; flex: none; background: #d0e1ea; display: flex; font-family: "Open Sans", sans-serif; font-weight: 400; color: #1a1a1a; }
.weather { width: 325px; padding: 6px 0 0 17px; position: relative; }
.weather span { position: absolute; left: 27px; top: 8px; width: 36px; height: 24px; border-radius: 12px; background: #f2f7fa; font-size: 15.500px; line-height: 23px; text-align: center; }
.apps { display: flex; }
.apps > div { width: 66.100px; height: 70px; display: grid; place-items: center; position: relative; }
.apps svg { width: 36px; height: 36px; position: relative; top: -1px; }
.run::after { content: ""; position: absolute; bottom: 7px; width: 9px; height: 5px; border-radius: 3px; background: #757d82; }
.hot::before { content: ""; position: absolute; left: 5px; top: 6px; width: 56px; height: 56px; border-radius: 5px; background: #e8f0f5; box-shadow: 0 1px 1px #b9cad3; }
.active::after { content: ""; position: absolute; bottom: 7px; width: 24px; height: 5px; border-radius: 3px; background: #0078d7; }
.tray { flex: 1; display: flex; align-items: center; padding-left: 34px; }
.cloud { margin-left: 26px; }
.lang { width: 54px; margin-left: 18px; text-align: center; }
.lang span, .clock span { display: block; font-size: 16.800px; line-height: 23px; }
.clock span { font-size: 17.500px; }
.wifi { margin-left: 18px; } .vol { margin-left: 12px; } .bat { margin-left: 11px; }
.clock { width: 112px; text-align: right; margin-left: 6px; margin-right: 11px; }
.tray b { width: 24px; height: 24px; border-radius: 12px; background: #0078d7; color: #fff; font-size: 14px; font-weight: 400; line-height: 24px; text-align: center; margin-bottom: 2px; }
.tip { position: absolute; left: 688px; top: 943px; width: 94px; height: 47px; border: 1px solid #ccc; border-radius: 6px; background: #f8f8f8; box-shadow: 0 5px 9px rgba(0,0,0,.2); color: #111; text-align: center; font: 400 17px/45px "Open Sans", sans-serif; }
```
FILE: chart.js
```js
// Plot origin: the SVG starts 564px from the left and 273px from the top of the window.
const ox = 564, oy = 273, x0 = 600.2, step = 47.09;
const ys = [668.7, 666.7, 697, 694.3, 697, 712.3, 688, 631.7, 628.7, 607.7, 592, 582.5, 603, 563, 549, 548, 505.5, 490, 505.5, 448, 313, 316, 340];
const parts = [];
for (const y of [367.5, 459.5, 552.5, 645.5, 738.5])
  parts.push(`<path d="M${576 - ox} ${y - oy}H${1659 - ox}" stroke="#f1f0ee"/>`);
parts.push(`<path d="M${576.5 - ox} ${285 - oy}V${831.5 - oy}H${1659.5 - ox}" fill="none" stroke="#f3f3f5"/>`);
const pts = ys.map((y, i) => [x0 + i * step - ox, y - oy]);
pts.forEach(([x], i) => {
  parts.push(`<path d="M${Math.round(x + step / 2) - 0.5} ${831 - oy}v4" stroke="#f3f3f5"/>`);
  const label = `${1997 + i}-${String((98 + i) % 100).padStart(2, '0')}`;
  parts.push(`<text transform="translate(${x + 7} ${908 - oy}) rotate(-90)" textLength="71">${label}</text>`);
});
parts.push(`<polyline points="${pts.join(' ')}" fill="none" stroke="#f28e2b" stroke-width="3" stroke-linejoin="round"/>`);
pts.forEach(([x, y]) => parts.push(`<circle cx="${x}" cy="${y}" r="3" fill="#f28e2b"/>`));
document.getElementById('plot').innerHTML = parts.join('');
```
